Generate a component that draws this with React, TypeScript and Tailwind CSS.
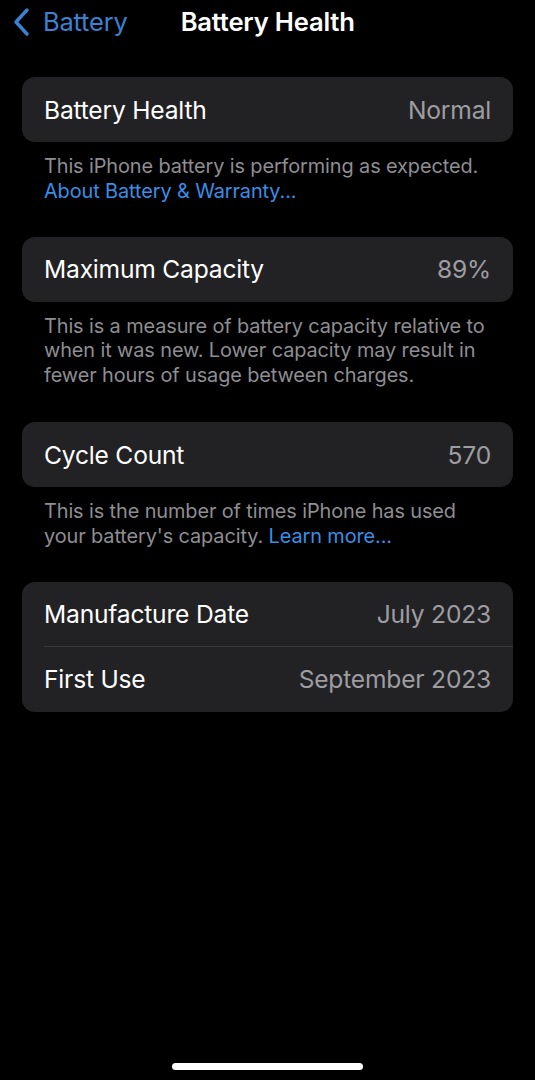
import React from "react";

const font = { fontFamily: "Inter, 'Noto Sans', sans-serif" };

function Row({ label, value, divider }: { label: string; value: string; divider?: boolean }) {
  return (
    <div className="relative flex h-[65px] items-center justify-between pl-[22px] pr-[22px] pt-[1px]">
      <span className="text-[24.6px] text-white tracking-[-0.2px]">{label}</span>
      <span className="text-[24.6px] text-[#9d9da2] tracking-[-0.2px]">{value}</span>
      {divider && <div className="absolute bottom-0 left-[22px] right-0 h-px bg-[#38383a]" />}
    </div>
  );
}

function Card({ children }: { children: React.ReactNode }) {
  return <div className="mx-[22px] overflow-hidden rounded-[13px] bg-[#222224]">{children}</div>;
}

function Footer({ children }: { children: React.ReactNode }) {
  return (
    <div className="mx-[22px] px-[22px] pt-[12px] text-[19.9px] leading-[24.8px] text-[#8e8e93] tracking-[-0.1px]">
      {children}
    </div>
  );
}

export default function App() {
  return (
    <div className="relative h-[1080px] w-[535px] overflow-hidden bg-black" style={font}>
      <div className="relative flex h-[44px] items-center">
        <div className="flex items-center pl-[12px]">
          <svg width="18" height="30" viewBox="0 0 18 30" fill="none">
            <path d="M15 3 L4 15 L15 27" stroke="#3a82d4" strokeWidth="3.4" strokeLinecap="round" strokeLinejoin="round" />
          </svg>
          <span className="ml-[13px] text-[25.5px] text-[#3a82d4] tracking-[-0.2px]">Battery</span>
        </div>
        <span className="ml-[53px] text-[25.6px] font-semibold text-white tracking-[-0.2px]">Battery Health</span>
      </div>

      <div className="pt-[33px]">
        <Card>
          <Row label="Battery Health" value="Normal" />
        </Card>
        <Footer>
          This iPhone battery is performing as expected.
          <br />
          <span className="text-[#3a8ee6]">About Battery &amp; Warranty...</span>
        </Footer>

        <div className="h-[33px]" />
        <Card>
          <Row label="Maximum Capacity" value="89%" />
        </Card>
        <Footer>
          This is a measure of battery capacity relative to when it was new. Lower capacity may result in fewer hours of usage between charges.
        </Footer>

        <div className="h-[34px]" />
        <Card>
          <Row label="Cycle Count" value="570" />
        </Card>
        <Footer>
          This is the number of times iPhone has used your battery's capacity.{" "}
          <span className="text-[#3a8ee6]">Learn more...</span>
        </Footer>

        <div className="h-[33px]" />
        <Card>
          <Row label="Manufacture Date" value="July 2023" divider />
          <Row label="First Use" value="September 2023" />
        </Card>
      </div>

      <div className="absolute bottom-[10px] left-[172px] h-[7px] w-[191px] rounded-full bg-white" />
    </div>
  );
}
